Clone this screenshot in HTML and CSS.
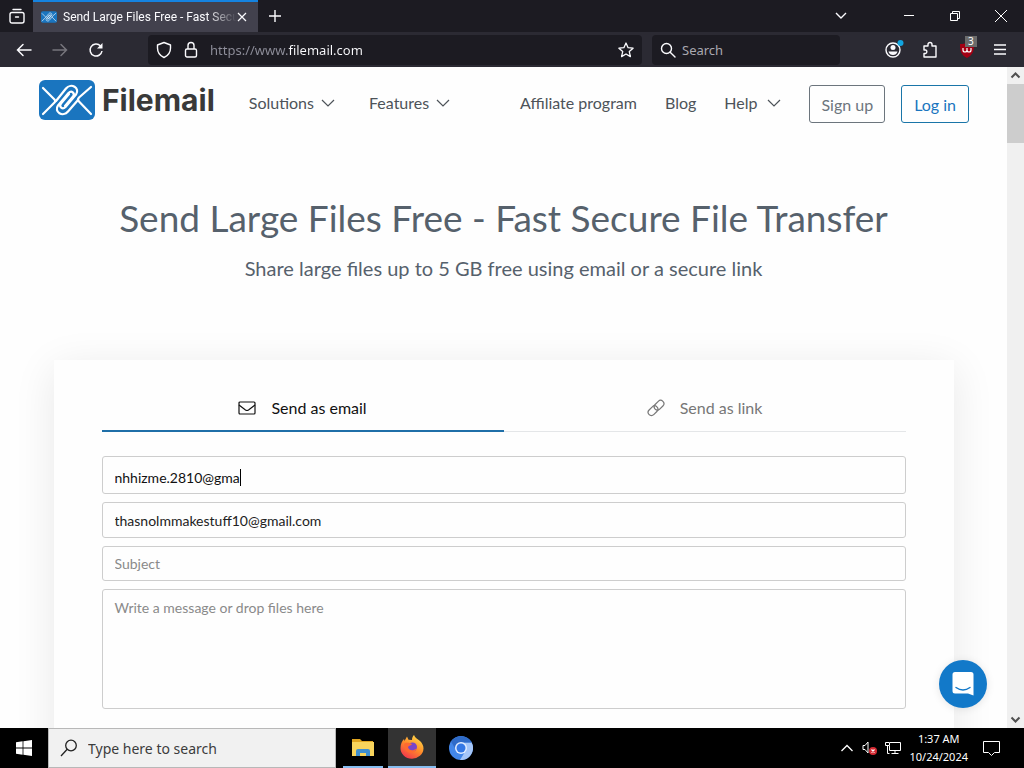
FILE: index.html
```html
<!DOCTYPE html>
<html lang="en">
<head>
  <meta charset="utf-8">
  <title>Send Large Files Free - Fast Secure File Transfer</title>
  <link rel="stylesheet" href="styles.css">
</head>
<body>
  <svg width="0" height="0" class="defs">
    <symbol id="logo" viewBox="0 0 56 40">
      <rect width="56" height="40" rx="6" fill="#1a75bf"/>
      <g fill="none" stroke="#fff" stroke-width="2.2" stroke-linecap="round" stroke-linejoin="round">
        <path d="M4 8L15.500 19.500Q17 21 15.500 22.500L4 34"/>
        <path d="M52 7L40 17.500Q38 19.500 40 21.500L52 34"/>
        <path d="M17 21L27 8.500C32 2.500 41.500 8 37 14.500L26.500 27C23.500 30 19.500 27 22 23.500L30 14"/>
        <path d="M39 20L29 31.500C24 37.500 14.500 32 19 25.500L29.500 13C32.500 10 36.500 13 34 16.500L26 26"/>
      </g>
    </symbol>
    <symbol id="down" viewBox="0 0 14 14">
      <path d="M1 5l6 6 6-6" fill="none" stroke="currentColor" stroke-width="1.2"/>
    </symbol>
  </svg>

  <header class="browser">
    <div class="tabbar">
      <button class="icon-btn recent" aria-label="Recent browsing">
        <svg width="16" height="16" viewBox="0 0 16 16" fill="none" stroke="#fbfbfe" stroke-width="1.4" stroke-linecap="round"><path d="M4 1.500h8"/><rect x="1" y="4.500" width="14" height="10.500" rx="2"/><path d="M6.500 9h3"/></svg>
      </button>
      <div class="tab">
        <svg class="favicon" width="16" height="12"><use href="#logo"/></svg>
        <span class="tab-title">Send Large Files Free - Fast Secu</span>
        <button class="icon-btn" aria-label="Close tab">
          <svg width="10" height="10" viewBox="0 0 10 10" stroke="#fbfbfe" stroke-width="1.2"><path d="M1 1l8 8M9 1l-8 8"/></svg>
        </button>
      </div>
      <button class="icon-btn new-tab" aria-label="New tab">
        <svg width="12" height="12" viewBox="0 0 12 12" stroke="#fbfbfe" stroke-width="1.4"><path d="M6 0v12M0 6h12"/></svg>
      </button>
      <div class="window-btns">
        <button class="icon-btn list-tabs" aria-label="List all tabs">
          <svg width="12" height="8" viewBox="0 0 12 8" fill="none" stroke="#fbfbfe" stroke-width="1.4"><path d="M1 1l5 5 5-5"/></svg>
        </button>
        <button class="icon-btn" aria-label="Minimize">
          <svg width="10" height="10" viewBox="0 0 10 10" stroke="#fff"><path d="M0 4.500h10"/></svg>
        </button>
        <button class="icon-btn" aria-label="Restore">
          <svg width="10" height="10" viewBox="0 0 10 10" fill="none" stroke="#fff"><path d="M.5 2.500h7v7h-7zM2.500 2.500v-2h7v7h-2"/></svg>
        </button>
        <button class="icon-btn" aria-label="Close">
          <svg width="12" height="12" viewBox="0 0 12 12" stroke="#fff"><path d="M0 0l12 12M12 0L0 12"/></svg>
        </button>
      </div>
    </div>

    <div class="toolbar">
      <div class="nav-btns">
        <button class="icon-btn" aria-label="Back">
          <svg width="16" height="16" viewBox="0 0 16 16" fill="none" stroke="#fbfbfe" stroke-width="1.5" stroke-linecap="round"><path d="M1.500 8H15M7 2.500L1.500 8 7 13.500"/></svg>
        </button>
        <button class="icon-btn" aria-label="Forward">
          <svg width="16" height="16" viewBox="0 0 16 16" fill="none" stroke="#77767d" stroke-width="1.5" stroke-linecap="round"><path d="M14.500 8H1M9 2.500L14.500 8 9 13.500"/></svg>
        </button>
        <button class="icon-btn" aria-label="Reload">
          <svg width="16" height="16" viewBox="0 0 16 16" fill="none" stroke="#fbfbfe" stroke-width="1.5"><path d="M14 9A6 6 0 1 1 12.500 4"/><path d="M14.500 1v5.500H9z" fill="#fbfbfe" stroke="none"/></svg>
        </button>
      </div>
      <div class="urlbar">
        <svg width="16" height="18" viewBox="0 0 16 18" fill="none" stroke="#fbfbfe" stroke-width="1.4"><path d="M8 1.500L14.500 4v3c0 5-3 8-6.500 9.500C4.500 15 1.500 12 1.500 7V4z" stroke-linejoin="round"/></svg>
        <svg width="14" height="18" viewBox="0 0 14 18" fill="none" stroke="#fbfbfe" stroke-width="1.4"><rect x="1.500" y="8" width="11" height="8" rx="1.500"/><path d="M4 8V4.500a3 3 0 0 1 6 0V8"/></svg>
        <input class="url" type="text" aria-label="Address" value="https://www.filemail.com">
        <button class="icon-btn" aria-label="Bookmark">
          <svg width="16" height="16" viewBox="0 0 16 16" fill="none" stroke="#fbfbfe" stroke-width="1.3" stroke-linejoin="round"><path d="M8 1l2.100 4.700 5 .5-3.800 3.400 1.100 5L8 12l-4.400 2.600 1.100-5L.9 6.200l5-.5z"/></svg>
        </button>
      </div>
      <div class="searchbar">
        <svg width="16" height="16" viewBox="0 0 16 16" fill="none" stroke="#fbfbfe" stroke-width="1.4" stroke-linecap="round"><circle cx="6.500" cy="6.500" r="5"/><path d="M10.200 10.200L15 15"/></svg>
        <input type="text" aria-label="Search" placeholder="Search">
      </div>
      <div class="tools">
        <button class="icon-btn" aria-label="Account">
          <svg width="20" height="20" viewBox="0 0 20 20"><circle cx="9" cy="10" r="7" fill="none" stroke="#fbfbfe" stroke-width="1.400"/><circle cx="9" cy="7.500" r="2.500" fill="#fbfbfe"/><path d="M4.500 11.500h9c-.5 2.500-2.500 3.500-4.500 3.500s-4-1-4.500-3.500z" fill="#fbfbfe"/><circle cx="16.500" cy="3" r="3" fill="#12a5e0"/></svg>
        </button>
        <button class="icon-btn" aria-label="Extensions">
          <svg width="16" height="18" viewBox="0 0 16 18" fill="none" stroke="#fbfbfe" stroke-width="1.4" stroke-linejoin="round"><path d="M1 5h4V3.500a2 2 0 0 1 4 0V5h4v11H1v-3.500h1.500a1.800 1.800 0 0 0 0-3.500H1z"/></svg>
        </button>
        <button class="icon-btn ublock" aria-label="uBlock Origin">
          <svg width="16" height="16" viewBox="0 0 16 16"><path d="M8 0c2 2 4 2 7 2 0 7-1 11-7 14C2 13 1 9 1 2c3 0 5 0 7-2z" fill="#a30014"/><path d="M4 6v2a2 2 0 0 0 4 0V6v2a2 2 0 0 0 4 0V6" fill="none" stroke="#fff" stroke-width="1.200"/></svg>
          <span class="count">3</span>
        </button>
        <button class="icon-btn" aria-label="Menu">
          <svg width="12" height="12" viewBox="0 0 12 12" stroke="#fbfbfe" stroke-width="1.400"><path d="M0 1h12M0 5.500h12M0 10h12"/></svg>
        </button>
      </div>
    </div>
  </header>

  <div class="viewport">
    <main class="page">
      <nav class="navbar">
        <a class="brand" href="#">
          <svg width="56" height="40"><use href="#logo"/></svg>
          <span>Filemail</span>
        </a>
        <div class="nav-left">
          <a href="#">Solutions <svg width="14" height="14"><use href="#down"/></svg></a>
          <a href="#">Features <svg width="14" height="14"><use href="#down"/></svg></a>
        </div>
        <div class="nav-right">
          <a href="#">Affiliate program</a>
          <a href="#">Blog</a>
          <a class="help" href="#">Help <svg width="14" height="14"><use href="#down"/></svg></a>
        </div>
        <div class="account">
          <button class="btn">Sign up</button>
          <button class="btn login">Log in</button>
        </div>
      </nav>

      <section class="hero">
        <h1>Send Large Files Free - Fast Secure File Transfer</h1>
        <p>Share large files up to 5 GB free using email or a secure link</p>
      </section>

      <form class="card">
        <div class="send-tabs">
          <button type="button" class="send-tab active">
            <svg width="18" height="14" viewBox="0 0 18 14" fill="none" stroke="currentColor" stroke-width="1.200"><rect x="1" y="1" width="16" height="12" rx="1"/><path d="M1 4l6.500 5q1.500 1 3 0L17 4"/></svg>
            Send as email
          </button>
          <button type="button" class="send-tab">
            <svg width="18" height="18" viewBox="0 0 18 18" fill="none" stroke="currentColor" stroke-width="1.200"><rect x="6.500" y="3" width="11" height="6.500" rx="3.250" transform="rotate(-45 12 6.250)"/><rect x=".5" y="8.500" width="11" height="6.500" rx="3.250" transform="rotate(-45 6 11.750)"/></svg>
            Send as link
          </button>
        </div>
        <div class="field to">
          <input type="text" aria-label="To" value="nhhizme.2810@gma"><span class="caret"></span>
        </div>
        <input class="field" type="email" aria-label="From" value="thasnolmmakestuff10@gmail.com">
        <input class="field subject" type="text" aria-label="Subject" placeholder="Subject">
        <textarea class="field" aria-label="Message" placeholder="Write a message or drop files here"></textarea>
      </form>
    </main>

    <div class="scrollbar">
      <svg width="17" height="17" viewBox="0 0 17 17" fill="none" stroke="#505050" stroke-width="2"><path d="M4.500 10.500l4-4 4 4"/></svg>
      <div class="thumb"></div>
      <svg width="17" height="17" viewBox="0 0 17 17" fill="none" stroke="#505050" stroke-width="2"><path d="M4.500 6.500l4 4 4-4"/></svg>
    </div>

    <button class="chat" aria-label="Open chat">
      <svg width="24" height="26" viewBox="0 0 24 26"><path d="M4 1h16a2.500 2.500 0 0 1 2.500 2.500v21L17 22.500H4A2.500 2.500 0 0 1 1.500 20V3.500A2.500 2.500 0 0 1 4 1z" fill="#fff"/><path d="M5 16.500q7 5 14 0" fill="none" stroke="#1279c9" stroke-width="1.400" stroke-linecap="round"/></svg>
    </button>
  </div>

  <footer class="taskbar">
    <button class="icon-btn start" aria-label="Start">
      <svg width="16" height="16" viewBox="0 0 16 16" fill="#fff"><path d="M0 2.300L6.600 1.300V7.600H0zM7.400 1.200L16 0v7.600H7.400zM0 8.400h6.600v6.300L0 13.700zM7.400 8.400H16V16l-8.600-1.200z"/></svg>
    </button>
    <label class="task-search">
      <svg width="18" height="18" viewBox="0 0 18 18" fill="none" stroke="#222" stroke-width="1.300"><circle cx="11" cy="6.500" r="5.300"/><path d="M7.200 10.200L1 17"/></svg>
      <input type="text" placeholder="Type here to search" aria-label="Type here to search">
    </label>
    <div class="apps">
      <button class="app open" aria-label="File Explorer">
        <svg width="24" height="24" viewBox="0 0 24 24"><path d="M1 3h8l2 2h11v3H1z" fill="#e0a520"/><path d="M1 6h22v14H1z" fill="#f8d45c"/><path d="M5 20v-5q0-2 2-2h10q2 0 2 2v5h-4v-3H9v3z" fill="#3f8fcf"/></svg>
      </button>
      <button class="app open current" aria-label="Firefox">
        <svg width="24" height="24" viewBox="0 0 24 24"><defs><linearGradient id="ff" x1=".8" y1="0" x2=".2" y2="1"><stop offset="0" stop-color="#ffe14a"/><stop offset=".5" stop-color="#ff8a2a"/><stop offset="1" stop-color="#f0304f"/></linearGradient></defs><path d="M14 0c1 3 4 4 6 6 2 2 3.500 4.500 3.500 7.500A11.500 10.500 0 0 1 .5 13C.5 9 2 6 4 4l.5 2L7 1.500l1.500 3.300L12 5c0-2 .7-4 2-5z" fill="url(#ff)"/><circle cx="12.500" cy="12" r="4.500" fill="#7a45c9"/><path d="M4 9c3-2 5-1 8 0-1 2-4 1.500-4 3.500 1 3 5 4 8.500 1C15 19 7 19 5 14z" fill="#ff6a30"/></svg>
      </button>
      <button class="app" aria-label="Chromium">
        <svg width="24" height="24" viewBox="0 0 24 24"><circle cx="12" cy="12" r="12" fill="#4286e8"/><path d="M12 6.500h10.600A12 12 0 0 1 11 24l5.500-9z" fill="#a5c6f8"/><path d="M2 5.500A12 12 0 0 1 22.600 6.500H12L7 14z" fill="#2f6bc8"/><circle cx="12" cy="12" r="6" fill="#e2edff"/><circle cx="12" cy="12" r="4.500" fill="#3478e5"/></svg>
      </button>
    </div>
    <div class="tray">
      <svg width="12" height="8" viewBox="0 0 12 8" fill="none" stroke="#fff" stroke-width="1.300"><path d="M.5 7L6 1.500 11.500 7"/></svg>
      <svg width="16" height="14" viewBox="0 0 16 14"><path d="M2 4.500h2L7 1v11L4 8.500H2z" fill="none" stroke="#fff"/><circle cx="12" cy="10" r="4" fill="#d42a32"/><path d="M10.500 8.500l3 3M13.500 8.500l-3 3" stroke="#fff" stroke-width="1.200"/></svg>
      <svg width="16" height="14" viewBox="0 0 16 14" fill="none" stroke="#fff"><path d="M5 1.500h10.500v8H4.500V5M10 9.500v3M6.500 12.500h7M.5 1.500h4v3h-4zM2.500 4.500v8h2"/></svg>
      <div class="clock"><span>1:37 AM</span><span>10/24/2024</span></div>
      <svg width="17" height="17" viewBox="0 0 17 17" fill="none" stroke="#fff"><path d="M.5 1.500h16v11h-5l-3 3-3-3h-5z"/></svg>
    </div>
  </footer>
</body>
</html>
```
FILE: styles.css
```css
* {
  box-sizing: border-box;
}

body {
  margin: 0;
  height: 100vh;
  display: flex;
  flex-direction: column;
  overflow: hidden;
  font-family: Lato, sans-serif;
}

button,
input,
textarea {
  font: inherit;
  margin: 0;
  padding: 0;
  border: none;
  outline: none;
  background: none;
}

a {
  color: inherit;
  text-decoration: none;
}

svg {
  display: block;
  flex-shrink: 0;
}

.defs {
  position: absolute;
}

.icon-btn {
  display: flex;
  align-items: center;
  justify-content: center;
}

/* browser window */
.browser {
  font-family: "Noto Sans", sans-serif;
  font-size: 12px;
  color: #fbfbfe;
  background: #1c1b22;
}

.tabbar {
  display: flex;
  height: 32px;
}

.recent {
  width: 33px;
}

.tab {
  display: flex;
  align-items: center;
  width: 225px;
  padding: 0 11px 0 8px;
  background: #42414d;
  border-top: 2px solid #1583e0;
}

.favicon {
  margin-right: 6px;
}

.tab-title {
  flex: 1;
  overflow: hidden;
  white-space: nowrap;
  font-family: Roboto, sans-serif;
  -webkit-mask-image: linear-gradient(to left, transparent, #000 30px);
  mask-image: linear-gradient(to left, transparent, #000 30px);
}

.new-tab {
  width: 34px;
}

.window-btns {
  display: flex;
  margin-left: auto;
}

.window-btns .icon-btn {
  width: 46px;
}

.window-btns .list-tabs {
  margin-right: 22px;
}

.toolbar {
  display: flex;
  align-items: center;
  height: 35px;
  background: #2b2a33;
}

.nav-btns {
  display: flex;
  gap: 20px;
  padding: 0 44px 0 16px;
}

.urlbar,
.searchbar {
  display: flex;
  align-items: center;
  height: 30px;
  background: #1c1b22;
  border-radius: 4px;
  font-size: 13px;
}

.urlbar {
  flex: 1;
  gap: 12px;
  padding: 0 8px;
}

/* protocol is dimmed, domain is bright */
.urlbar .url {
  flex: 1;
  min-width: 0;
  color: transparent;
  background: linear-gradient(to right, #8f8f9b 78px, #fbfbfe 78px);
  -webkit-background-clip: text;
  background-clip: text;
}

.searchbar {
  gap: 6px;
  width: 188px;
  margin-left: 10px;
  padding: 0 8px;
}

.searchbar input {
  width: 100%;
  color: #fbfbfe;
}

.searchbar input::placeholder {
  color: #a9a8b0;
}

.tools {
  display: flex;
  justify-content: space-between;
  align-items: center;
  width: 184px;
  padding: 0 18px 0 44px;
}

.ublock {
  position: relative;
}

.count {
  position: absolute;
  top: -6px;
  right: -2px;
  padding: 0 3px;
  background: #6b6b6b;
  color: #fff;
  font-size: 10px;
  line-height: 11px;
}

/* web page */
.viewport {
  position: relative;
  display: flex;
  flex: 1;
  min-height: 0;
}

.page {
  flex: 1;
  overflow: hidden;
  background: #fefefe;
}

.navbar {
  display: flex;
  align-items: center;
  height: 74px;
  padding: 0 38px 0 39px;
  color: #4d5359;
  font-size: 16px;
}

.brand {
  display: flex;
  align-items: center;
  gap: 7px;
  margin-bottom: 8px;
  color: #393939;
  font-family: Inter, sans-serif;
  font-size: 30px;
  font-weight: 700;
}

.nav-left,
.nav-right,
.account {
  display: flex;
  align-items: center;
}

.nav-left,
.nav-right {
  margin-bottom: 4px;
}

.nav-left a,
.nav-right a {
  display: flex;
  align-items: center;
  gap: 7px;
}

.nav-left {
  gap: 34px;
  margin-left: 34px;
}

.nav-right {
  gap: 28px;
  margin-left: auto;
}

.nav-right .help {
  gap: 10px;
}

.account {
  gap: 16px;
  margin-left: 28px;
}

.btn {
  height: 38px;
  padding: 1px 11px 0;
  border: 1px solid #6c757d;
  border-radius: 3px;
  color: #6c757d;
}

.btn.login {
  padding: 1px 12px 0;
  border-color: #1a75a8;
  color: #1a75bf;
}

.hero {
  padding-top: 53px;
  height: 219px;
  text-align: center;
  color: #56616c;
}

.hero h1 {
  margin: 0;
  font-size: 37px;
  line-height: 48px;
  font-weight: 400;
}

.hero p {
  margin: 14px 0 0;
  font-size: 20px;
  line-height: 24px;
}

.card {
  display: flex;
  flex-direction: column;
  gap: 8px;
  max-width: 900px;
  min-height: 460px;
  margin: 0 auto;
  padding: 25px 48px 0;
  background: #fefefe;
  box-shadow: 0 8px 40px rgba(0, 0, 0, 0.09);
}

.send-tabs {
  display: flex;
  margin-bottom: 16px;
}

.send-tab {
  display: flex;
  flex: 1;
  align-items: center;
  justify-content: center;
  gap: 15px;
  height: 47px;
  padding-bottom: 1px;
  border-bottom: 1px solid #e4e6e8;
  color: #777;
  font-size: 16px;
}

.send-tab.active {
  padding-bottom: 0;
  border-bottom: 2px solid #1f6fa8;
  color: #111;
}

.field {
  display: block;
  width: 100%;
  height: 36px;
  padding: 0 12px;
  border: 1px solid #cdcdcd;
  border-radius: 3px;
  color: #222;
  font-size: 14px;
}

.field::placeholder {
  color: #8a8a8a;
}

.to {
  display: flex;
  align-items: center;
  height: 38px;
  padding-top: 4px;
}

.to input {
  field-sizing: content;
  color: #111;
}

.caret {
  width: 1px;
  height: 17px;
  background: #000;
}

.subject {
  height: 35px;
}

textarea.field {
  height: 120px;
  padding-top: 9px;
  resize: none;
}

.scrollbar {
  width: 17px;
  display: flex;
  flex-direction: column;
  background: #f0f0f0;
}

.thumb {
  height: 59px;
  margin-bottom: auto;
  background: #cdcdcd;
}

.chat {
  position: absolute;
  right: 37px;
  bottom: 20px;
  display: flex;
  align-items: center;
  justify-content: center;
  width: 48px;
  height: 48px;
  border-radius: 50%;
  background: #1279c9;
  box-shadow: 0 1px 8px rgba(0, 0, 0, 0.1);
}

/* windows taskbar */
.taskbar {
  display: flex;
  height: 40px;
  background: #000;
  color: #fff;
  font-family: "Noto Sans", sans-serif;
}

.start {
  width: 48px;
}

.task-search {
  display: flex;
  align-items: center;
  gap: 10px;
  width: 288px;
  padding: 0 11px;
  border: 1px solid #b8b8b8;
  background: #f1f1f1;
  font-size: 14px;
}

.task-search input {
  flex: 1;
  min-width: 0;
}

.task-search input::placeholder {
  color: #3c3c3c;
}

.apps {
  display: flex;
  gap: 1px;
  margin-left: 3px;
}

.app {
  display: flex;
  align-items: center;
  justify-content: center;
  width: 48px;
}

.app.open {
  background: linear-gradient(#86bdf0, #86bdf0) center bottom / 40px 2px no-repeat;
}

.app.current {
  background: #333;
  border-bottom: 2px solid #86bdf0;
}

.tray {
  display: flex;
  align-items: center;
  gap: 8px;
  margin-left: auto;
  padding-right: 24px;
}

.clock {
  display: flex;
  flex-direction: column;
  align-items: center;
  font-size: 11px;
  line-height: 18px;
}

.clock + svg {
  margin-left: 7px;
}
```
